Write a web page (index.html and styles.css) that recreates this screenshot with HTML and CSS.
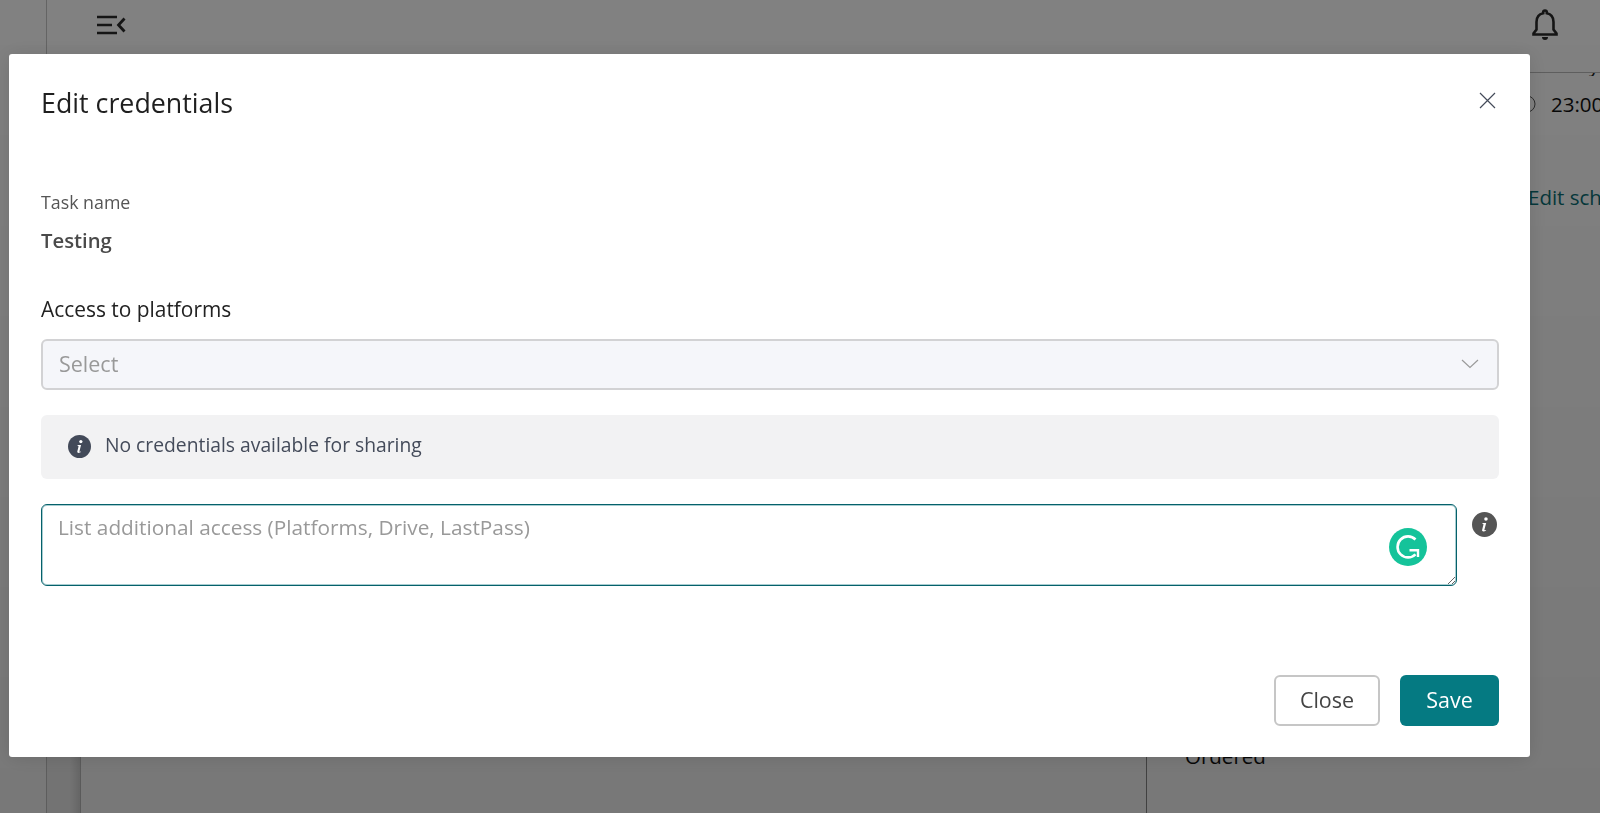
FILE: index.html
```html
<!DOCTYPE html>
<html lang="en">
<head>
<meta charset="utf-8">
<title>Edit credentials</title>
<link rel="stylesheet" href="styles.css">
</head>
<body>
<div class="app">
  <aside class="rail"></aside>
  <div class="workspace">
    <header class="topbar">
      <svg class="menu-icon" width="30" height="20" viewBox="0 0 30 20" aria-hidden="true"><path d="M0 2h20M0 10h15M0 18h20" fill="none" stroke="#2a2a2a" stroke-width="2.6"/><path d="M27.500 3.500L21.500 10l6 6.500" fill="none" stroke="#2a2a2a" stroke-width="2.800"/></svg>
      <svg class="bell-icon" width="26" height="32" viewBox="0 0 26 32" aria-hidden="true"><path d="M13 1.500a1.800 1.800 0 0 1 1.800 1.800v1C19.500 5.200 21.500 9 21.500 13v7.500l3 4v1h-23v-1l3-4V13c0-4 2-7.800 6.700-8.700v-1A1.800 1.800 0 0 1 13 1.500z" fill="none" stroke="#2b2b2b" stroke-width="2.600"/><path d="M10 28h6a3 3 0 0 1-6 0z" fill="#2b2b2b"/></svg>
    </header>
    <div class="columns">
      <div class="subrail"></div>
      <main class="main"></main>
      <section class="panel">
        <div class="clipped"><span>Weekly</span></div>
        <div class="time"><svg class="clock" width="18" height="18" viewBox="0 0 18 18" aria-hidden="true"><circle cx="9" cy="9" r="8" fill="none" stroke="#555" stroke-width="1"/><path d="M9 5v4h3" fill="none" stroke="#555"/></svg><span>23:00</span></div>
        <a class="edit-link">Edit schedule</a>
        <div class="ordered">Ordered</div>
      </section>
    </div>
  </div>
</div>

<div class="backdrop">
  <div class="modal">
    <div class="modal-head">
      <h2 class="modal-title">Edit credentials</h2>
      <svg class="close-icon" width="17" height="17" viewBox="0 0 17 17" aria-hidden="true"><path d="M1 1l15 15M16 1L1 16" fill="none" stroke="#444b5a" stroke-width="1.200"/></svg>
    </div>
    <div class="field-label">Task name</div>
    <div class="field-value">Testing</div>
    <div class="section-label">Access to platforms</div>
    <div class="select">
      <span>Select</span>
      <svg width="18" height="10" viewBox="0 0 18 10" aria-hidden="true"><path d="M1 1l8 7.500L17 1" fill="none" stroke="#9a9a9a" stroke-width="1.200"/></svg>
    </div>
    <div class="alert">
      <svg width="23" height="23" viewBox="0 0 24 24" aria-hidden="true"><circle cx="12" cy="12" r="12" fill="#434a59"/><circle cx="13.400" cy="6.800" r="1.700" fill="#fff"/><path d="M10 10.500h3.600l-1.700 6.600c-.1.500.3.700 1.500.1l.2.600c-1.500 1-4.200 1.500-3.900-.5l1.300-5.300c.1-.6-.3-.8-1.100-.8z" fill="#fff"/></svg>
      <span class="alert-text">No credentials available for sharing</span>
    </div>
    <div class="notes-row">
      <div class="notes-wrap">
        <textarea class="notes" placeholder="List additional access (Platforms, Drive, LastPass)"></textarea>
        <svg class="grammarly" width="38" height="38" viewBox="0 0 38 38" aria-hidden="true"><circle cx="19" cy="19" r="19" fill="#15c39a"/><path d="M26.500 11.500A10.500 10.500 0 1 0 26.500 26.300" fill="none" stroke="#fff" stroke-width="2.600"/><path d="M20.500 22.300H29V29" fill="none" stroke="#fff" stroke-width="2.400"/></svg>
      </div>
      <svg class="notes-info" width="25" height="25" viewBox="0 0 24 24" aria-hidden="true"><circle cx="12" cy="12" r="12" fill="#555"/><circle cx="13.400" cy="6.800" r="1.700" fill="#fff"/><path d="M10 10.500h3.600l-1.700 6.600c-.1.500.3.700 1.500.1l.2.600c-1.500 1-4.200 1.500-3.900-.5l1.300-5.300c.1-.6-.3-.8-1.100-.8z" fill="#fff"/></svg>
    </div>
    <div class="actions">
      <button class="btn btn-close" type="button">Close</button>
      <button class="btn btn-save" type="button">Save</button>
    </div>
  </div>
</div>
</body>
</html>
```
FILE: styles.css
```css
* { box-sizing: border-box; }
html, body { height: 100%; }
body {
  margin: 0;
  overflow: hidden;
  background: #fff;
  font-family: "Open Sans", "Lato", sans-serif;
  color: #222;
}

/* page behind the dialog */
.app { display: flex; height: 813px; }
.rail { width: 47px; flex: none; border-right: 1px solid #c6c6c6; }
.workspace { flex: 1; min-width: 0; display: flex; flex-direction: column; }
.topbar {
  height: 73px;
  flex: none;
  display: flex;
  justify-content: space-between;
  padding: 15px 42px 0 50px;
  border-bottom: 1px solid #bbb;
}
.bell-icon { margin-top: -6px; }
.columns { flex: 1; display: flex; min-height: 0; }
.subrail {
  width: 34px;
  flex: none;
  background: linear-gradient(to right, #f4f4f4 0 70%, #d8d8d8 100%);
  border-right: 1px solid #c0c0c0;
}
.main { width: 1065px; flex: none; }
.panel {
  flex: 1;
  min-width: 0;
  overflow: hidden;
  border-left: 1px solid #8a8a8a;
  padding-left: 38px;
  white-space: nowrap;
  font-size: 20.500px;
  line-height: 26px;
}
.clipped { height: 3px; overflow: hidden; margin-left: 346px; }
.clipped span { display: block; margin-top: -21px; line-height: 24px; }
.time { display: flex; width: max-content; align-items: center; gap: 15px; margin: 16px 0 0 333px; height: 24px; color: #111; }
.clock { flex: none; }
.edit-link { display: block; margin: 68px 0 0 343px; color: #0a6f75; }
.ordered { margin-top: 533px; color: #111; }

/* dialog */
.backdrop {
  position: fixed;
  inset: 0;
  padding: 54px 70px 56px 9px;
  background: linear-gradient(to bottom, rgba(0,0,0,.495), rgba(0,0,0,.53));
}
.modal {
  height: 703px;
  padding: 0 31px 0 32px;
  background: #fff;
  border-radius: 3px;
  box-shadow: 0 2px 20px rgba(0,0,0,.12);
  display: flex;
  flex-direction: column;
  color: #222;
}
.modal-head { display: flex; justify-content: space-between; padding-top: 33px; }
.modal-title { margin: 0; font-size: 26.800px; line-height: 32px; font-weight: 400; color: #1f1f1f; }
.close-icon { margin: 5px 3px 0 0; }
.field-label { margin-top: 72px; font-size: 17.800px; line-height: 22px; color: #555; }
.field-value { margin-top: 15px; font-size: 20.300px; line-height: 24px; font-weight: 600; color: #4a4a4a; }
.section-label { margin-top: 45px; font-size: 20.900px; line-height: 24px; color: #222; }
.select {
  margin-top: 18px;
  height: 51px;
  padding: 0 18px 2px 16px;
  display: flex;
  align-items: center;
  justify-content: space-between;
  background: #f5f6fa;
  border: 2px solid #d2d2d4;
  border-radius: 6px;
  font-size: 21.500px;
  color: #999;
}
.alert {
  margin-top: 25px;
  height: 64px;
  padding: 0 27px 2px;
  display: flex;
  align-items: center;
  gap: 14px;
  background: #f2f2f3;
  border-radius: 6px;
  font-size: 19.300px;
  color: #444b5a;
}
.alert-text { padding-bottom: 3px; }
.notes-row { margin-top: 25px; display: flex; align-items: flex-start; gap: 15px; }
.notes-wrap { position: relative; flex: 1; display: flex; }
.notes {
  display: block;
  width: 100%;
  height: 82px;
  padding: 10px 16px;
  border: 1px solid #05616b;
  border-radius: 6px;
  box-shadow: inset 0 0 0 1px rgba(7,112,122,.35);
  outline: none;
  background: #fff;
  font-family: inherit;
  font-size: 20.800px;
  line-height: 24px;
}
.notes::placeholder { color: #999; opacity: 1; }
.grammarly { position: absolute; right: 30px; top: 24px; }
.notes-info { flex: none; margin: 8px 2px 0 0; }
.actions { margin-top: auto; padding-bottom: 31px; display: flex; justify-content: flex-end; gap: 20px; }
.btn {
  height: 51px;
  padding: 0 0 2px;
  border-radius: 6px;
  font-family: inherit;
  font-size: 21.500px;
  font-weight: 400;
}
.btn-close { width: 106px; background: #fff; border: 2px solid #c6c6c6; color: #444; }
.btn-save { width: 99px; background: #057a82; border: 0; color: #fff; font-weight: 500; }
```
